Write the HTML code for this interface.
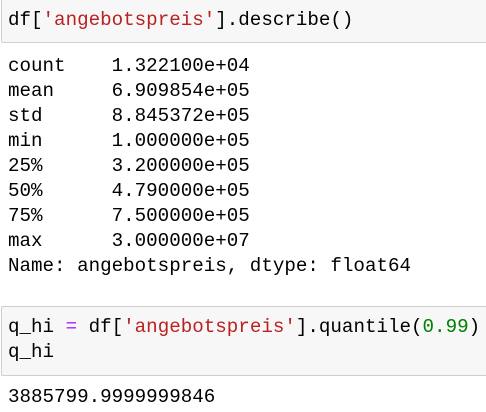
<!DOCTYPE html>
<html><head><style>
body{margin:0;background:#fff;width:486px;height:412px;overflow:hidden;position:relative;font-family:"Liberation Mono",monospace;font-size:19.2px;color:#000}
.cell{position:absolute;left:1px;width:500px;background:#f7f7f7;border:1px solid #cfcfcf;border-radius:2px}
.l{position:absolute;left:8px;white-space:pre;line-height:25px}
.s{color:#ba2121}.n{color:#008000}.o{color:#aa22ff}
</style></head><body>
<div class="cell" style="top:-2px;height:43px"></div>
<div class="l" style="top:8px">df[<span class="s">'angebotspreis'</span>].describe()</div>
<div class="l" style="top:54px">count    1.322100e+04
mean     6.909854e+05
std      8.845372e+05
min      1.000000e+05
25%      3.200000e+05
50%      4.790000e+05
75%      7.500000e+05
max      3.000000e+07
Name: angebotspreis, dtype: float64</div>
<div class="cell" style="top:306px;height:68px"></div>
<div class="l" style="top:315px">q_hi <span class="o">=</span> df[<span class="s">'angebotspreis'</span>].quantile(<span class="n">0.99</span>)
q_hi</div>
<div class="l" style="top:385px">3885799.9999999846</div>
</body></html>
